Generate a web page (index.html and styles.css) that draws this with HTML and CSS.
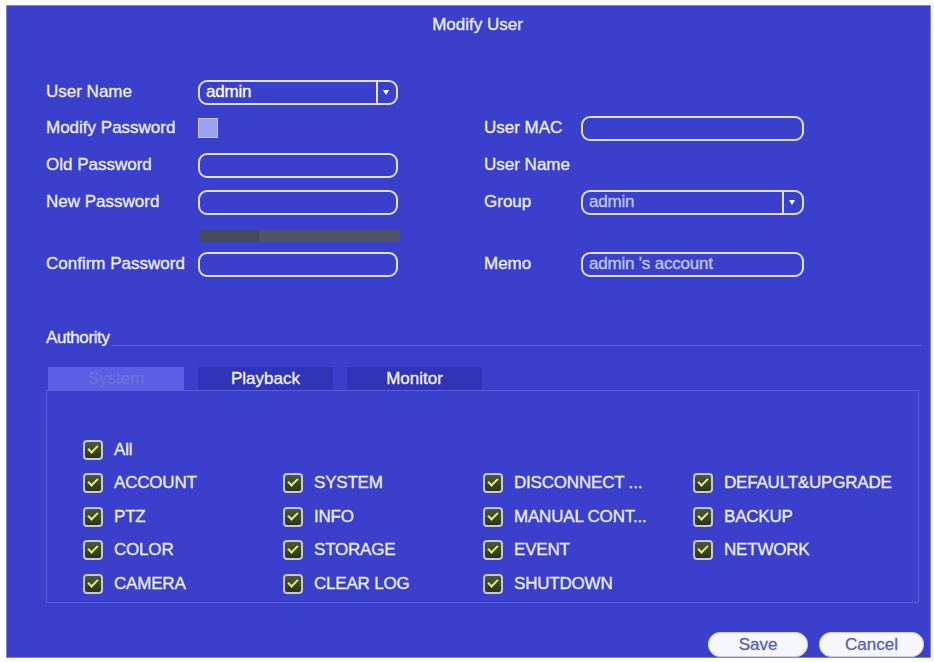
FILE: index.html
```html
<!DOCTYPE html>
<html>
<head>
<meta charset="utf-8">
<title>Modify User</title>
<link rel="stylesheet" href="styles.css">
</head>
<body>
<div class="panel">
  <div class="title">Modify User</div>

  <div class="form">
    <div class="lbl">User Name</div>
    <div class="select"><span class="val">admin</span><span class="arrow"></span></div>
    <div class="sp"></div><div class="lbl2"></div><div></div>

    <div class="lbl">Modify Password</div>
    <div><span class="plainbox"></span></div>
    <div class="sp"></div><div class="lbl2">User MAC</div><div class="input wide"></div>

    <div class="lbl">Old Password</div>
    <div class="input"></div>
    <div class="sp"></div><div class="lbl2">User Name</div><div></div>

    <div class="lbl">New Password</div>
    <div class="input"></div>
    <div class="sp"></div><div class="lbl2">Group</div>
    <div class="select wide"><span class="val dim">admin</span><span class="arrow"></span></div>

    <div class="lbl"></div>
    <div class="strength"></div>
    <div class="sp"></div><div class="lbl2"></div><div></div>

    <div class="lbl">Confirm Password</div>
    <div class="input"></div>
    <div class="sp"></div><div class="lbl2">Memo</div>
    <div class="input wide"><span class="val dim">admin 's account</span></div>
  </div>

  <div class="auth-head"><span>Authority</span><div class="rule"></div></div>

  <div class="tabs">
    <div class="tab active">System</div>
    <div class="tab">Playback</div>
    <div class="tab">Monitor</div>
  </div>

  <div class="tabbox">
    <div class="checks">
      <label class="ck"><span class="cb"></span>All</label>
      <span></span><span></span><span></span>
      <label class="ck"><span class="cb"></span>ACCOUNT</label>
      <label class="ck"><span class="cb"></span>SYSTEM</label>
      <label class="ck"><span class="cb"></span>DISCONNECT ...</label>
      <label class="ck"><span class="cb"></span>DEFAULT&amp;UPGRADE</label>
      <label class="ck"><span class="cb"></span>PTZ</label>
      <label class="ck"><span class="cb"></span>INFO</label>
      <label class="ck"><span class="cb"></span>MANUAL CONT...</label>
      <label class="ck"><span class="cb"></span>BACKUP</label>
      <label class="ck"><span class="cb"></span>COLOR</label>
      <label class="ck"><span class="cb"></span>STORAGE</label>
      <label class="ck"><span class="cb"></span>EVENT</label>
      <label class="ck"><span class="cb"></span>NETWORK</label>
      <label class="ck"><span class="cb"></span>CAMERA</label>
      <label class="ck"><span class="cb"></span>CLEAR LOG</label>
      <label class="ck"><span class="cb"></span>SHUTDOWN</label>
      <span></span>
    </div>
  </div>

  <div class="footer">
    <button class="btn save">Save</button>
    <button class="btn cancel">Cancel</button>
  </div>
</div>
</body>
</html>
```
FILE: styles.css
```css
html, body {
  margin: 0;
  padding: 0;
  background: #ffffff;
}
body {
  font-family: "Liberation Sans", Arial, sans-serif;
  font-size: 17px;
  color: #eef0ff;
  -webkit-text-stroke: 0.3px currentColor;
}
.panel {
  box-sizing: border-box;
  margin: 5px 0 0 6px;
  width: 925px;
  height: 653px;
  background: #3a3fcc;
  border: 1px solid #7d82e2;
  display: flex;
  flex-direction: column;
  padding-left: 39px;
  padding-right: 0;
}
.title {
  margin-top: 9px;
  height: 20px;
  line-height: 20px;
  text-align: center;
  margin-left: -39px;
  padding-left: 18px;
}
.form {
  margin-top: 39px;
  display: grid;
  grid-template-columns: 152px 200px 86px 97px 223px;
  grid-template-rows: 36px 36px 38px 36px 30px 28px;
  align-items: center;
}
.lbl, .lbl2 {
  white-space: nowrap;
  line-height: 20px;
}
.input, .select {
  box-sizing: border-box;
  height: 25px;
  border: 2px solid #dfe2ff;
  border-radius: 9px;
  background: #3a3fcc;
  display: flex;
  align-items: center;
  padding-left: 6px;
  overflow: hidden;
}
.val {
  flex: 1;
  line-height: 20px;
  color: #ffffff;
  letter-spacing: -0.2px;
}
.val.dim {
  color: #c3c7f0;
}
.arrow {
  align-self: stretch;
  width: 18px;
  border-left: 2px solid #dfe2ff;
  position: relative;
}
.arrow::after {
  content: "";
  position: absolute;
  left: 5px;
  top: 8px;
  border-top: 5px solid #ffffff;
  border-left: 3.5px solid transparent;
  border-right: 3.5px solid transparent;
}
.plainbox {
  display: block;
  box-sizing: border-box;
  width: 20px;
  height: 20px;
  background: #9aa0f2;
  border: 1px solid #c8ccff;
}
.strength {
  height: 12px;
  width: 201px;
  margin-left: 1px;
  margin-top: 1px;
  background: linear-gradient(to right, #464a5c 0, #464a5c 60px, #4f5466 60px, #4f5466 100%);
  filter: blur(0.5px);
}
.auth-head {
  margin-top: 50px;
  display: flex;
  align-items: flex-end;
  height: 20px;
  line-height: 20px;
  margin-right: 8px;
}
.auth-head span {
  letter-spacing: -0.4px;
}
.rule {
  flex: 1;
  height: 1px;
  background: #5a61e4;
  margin-bottom: 2px;
  margin-left: 2px;
}
.tabs {
  margin-top: 19px;
  display: flex;
  gap: 14px;
  padding-left: 2px;
  height: 23px;
}
.tab {
  width: 135px;
  height: 23px;
  line-height: 23px;
  text-align: center;
  background: #3034b6;
  color: #f4f4ff;
}
.tab.active {
  width: 136px;
  background: #5960e4;
  color: #6c73dc;
}
.tabbox {
  box-sizing: border-box;
  width: 873px;
  height: 213px;
  border: 1px solid #575ee2;
  padding: 42px 0 0 36px;
}
.checks {
  display: grid;
  grid-template-columns: 200px 200px 210px auto;
  grid-auto-rows: 33.5px;
  align-items: center;
}
.ck {
  display: flex;
  align-items: center;
  gap: 11px;
  white-space: nowrap;
  line-height: 20px;
  letter-spacing: -0.2px;
}
.cb {
  position: relative;
  box-sizing: border-box;
  flex: none;
  width: 20px;
  height: 20px;
  border: 2px solid #c6c9d8;
  border-radius: 4px;
  background: linear-gradient(#4c5a34, #2c3422);
  -webkit-text-stroke: 0;
}
.cb::after {
  content: "";
  position: absolute;
  left: 3px;
  top: 3px;
  width: 8px;
  height: 4px;
  border-left: 2px solid #e4ea80;
  border-bottom: 2px solid #e4ea80;
  transform: rotate(-45deg);
}
.footer {
  margin-top: auto;
  display: flex;
  justify-content: flex-end;
  gap: 11px;
  padding-right: 6px;
}
.btn {
  box-sizing: border-box;
  height: 25px;
  border: 1px solid #c9cbe2;
  border-radius: 12px;
  background: #f6f7fd;
  color: #5460b4;
  font-family: "Liberation Sans", Arial, sans-serif;
  font-size: 17px;
  line-height: 20px;
  padding: 0;
  -webkit-text-stroke: 0.3px currentColor;
}
.save { width: 100px; }
.cancel { width: 105px; }
```
